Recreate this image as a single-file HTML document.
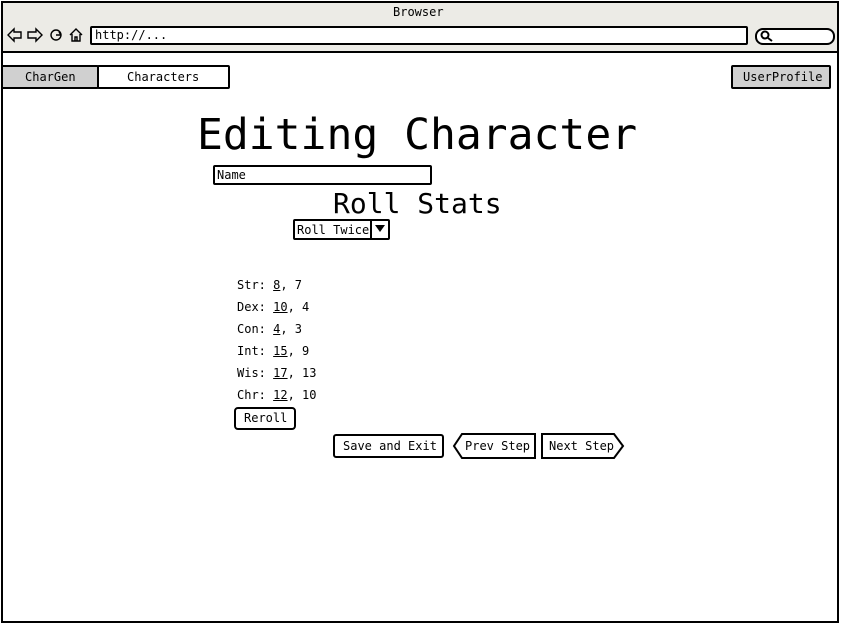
<!DOCTYPE html>
<html><head><style>
body{margin:0;width:841px;height:625px;background:#fff;position:relative;overflow:hidden;font-family:"DejaVu Sans Mono","Liberation Mono",monospace;color:#000}
.a{position:absolute}
.box{position:absolute;border:2px solid #000;box-sizing:border-box;border-radius:2px}
.t{position:absolute;font-size:12px;white-space:pre}
u{text-decoration:underline}
</style></head><body>
<div class="a" style="left:1px;top:1px;width:838px;height:622px;border:2px solid #000;box-sizing:border-box"></div>
<div class="a" style="left:3px;top:3px;width:834px;height:48px;background:#ecebe6;border-bottom:2px solid #000"></div>
<div class="t" style="left:393px;top:5px">Browser</div>
<svg class="a" style="left:6px;top:26px" width="80" height="18" viewBox="0 0 80 18" fill="none" stroke="#000" stroke-width="1.4">
<path d="M2 9 L8 3 V6 H15 V12 H8 V15 Z"/>
<path d="M36 9 L30 3 V6 H22 V12 H30 V15 Z"/>
<circle cx="50" cy="9" r="5"/><path d="M50 9 H55 M53 6 L55 9"/>
<path d="M64 9 L70 3 L76 9 M66 8 V15 H74 V8 M69 15 V11 H71 V15"/>
</svg>
<div class="box" style="left:90px;top:26px;width:658px;height:19px;background:#fff"></div>
<div class="t" style="left:95px;top:28px">http://...</div>
<div class="box" style="left:755px;top:28px;width:80px;height:17px;background:#fff;border-radius:8px"></div>
<svg class="a" style="left:760px;top:30px" width="14" height="13"><circle cx="5" cy="5" r="3.5" fill="none" stroke="#000" stroke-width="2"/><path d="M8 8 L12 11" stroke="#000" stroke-width="2"/></svg>
<div class="box" style="left:1px;top:65px;width:98px;height:24px;background:#d0d0d0"></div>
<div class="t" style="left:25px;top:70px">CharGen</div>
<div class="box" style="left:97px;top:65px;width:133px;height:24px;background:#fff"></div>
<div class="t" style="left:127px;top:70px">Characters</div>
<div class="box" style="left:731px;top:65px;width:100px;height:24px;background:#d0d0d0"></div>
<div class="t" style="left:743px;top:70px">UserProfile</div>
<div class="a" style="left:197px;top:110px;font-size:43px;white-space:pre">Editing Character</div>
<div class="box" style="left:213px;top:165px;width:219px;height:20px"></div>
<div class="t" style="left:217px;top:168px">Name</div>
<div class="a" style="left:333px;top:187px;font-size:28px;white-space:pre">Roll Stats</div>
<div class="box" style="left:293px;top:219px;width:97px;height:21px"></div>
<div class="a" style="left:370px;top:219px;width:2px;height:21px;background:#000"></div>
<div class="t" style="left:297px;top:223px">Roll Twice</div>
<svg class="a" style="left:375px;top:225px" width="11" height="8"><path d="M0 0 H10 L5 7 Z"/></svg>
<div class="t" style="left:237px;top:278px">Str: <u>8</u>, 7</div>
<div class="t" style="left:237px;top:300px">Dex: <u>10</u>, 4</div>
<div class="t" style="left:237px;top:322px">Con: <u>4</u>, 3</div>
<div class="t" style="left:237px;top:344px">Int: <u>15</u>, 9</div>
<div class="t" style="left:237px;top:366px">Wis: <u>17</u>, 13</div>
<div class="t" style="left:237px;top:388px">Chr: <u>12</u>, 10</div>
<div class="box" style="left:234px;top:407px;width:62px;height:23px;border-radius:4px"></div>
<div class="t" style="left:244px;top:411px">Reroll</div>
<div class="box" style="left:333px;top:434px;width:111px;height:24px;border-radius:3px"></div>
<div class="t" style="left:343px;top:439px">Save and Exit</div>
<svg class="a" style="left:452px;top:433px" width="175" height="26" fill="none" stroke="#000" stroke-width="2">
<path d="M10 1 H83 V25 H10 L2 13 Z"/>
<path d="M90 1 H162 L171 13 L162 25 H90 Z"/>
</svg>
<div class="t" style="left:465px;top:439px">Prev Step</div>
<div class="t" style="left:549px;top:439px">Next Step</div>
</body></html>
